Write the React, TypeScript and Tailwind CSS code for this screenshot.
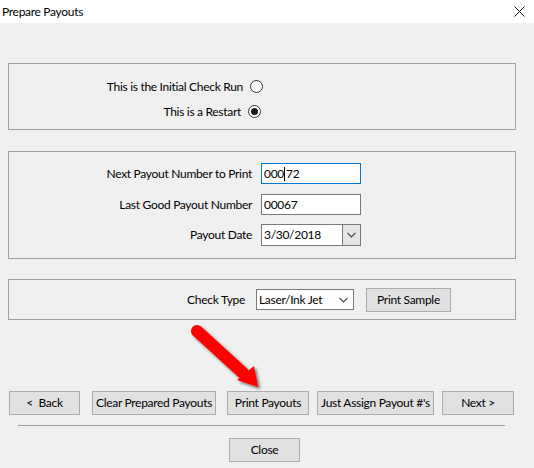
import { ReactNode } from "react";

const font = { fontFamily: 'Lato, "Segoe UI", sans-serif' };

function Radio({ checked }: { checked?: boolean }) {
  return (
    <span className="flex h-[13px] w-[13px] items-center justify-center rounded-full border border-[#333] bg-white">
      {checked && <span className="h-[7px] w-[7px] rounded-full bg-[#1a1a1a]" />}
    </span>
  );
}

function Btn({ children, className = "" }: { children: ReactNode; className?: string }) {
  return (
    <button
      className={`flex h-[24px] items-center justify-center whitespace-nowrap border border-[#adadad] bg-[#e1e1e1] text-[12px] tracking-[-0.3px] text-black ${className}`}
    >
      {children}
    </button>
  );
}

function Chevron() {
  return (
    <svg width="9" height="6" viewBox="0 0 9 6" fill="none">
      <path d="M0.5 0.8 L4.5 4.8 L8.5 0.8" stroke="#444" strokeWidth="1.2" />
    </svg>
  );
}

function Group({ children, className = "" }: { children: ReactNode; className?: string }) {
  return <div className={`mr-[10px] border border-[#a0a0a0] ${className}`}>{children}</div>;
}

export default function App() {
  return (
    <div
      className="relative h-[468px] w-[534px] overflow-hidden bg-[#f0f0f0] text-[12px] tracking-[-0.3px] text-black"
      style={font}
    >
      {/* window title */}
      <div className="flex h-[23px] items-center justify-between bg-white pl-[2px] pr-[9px]">
        <span className="text-[12px]">Prepare Payouts</span>
        <svg width="11" height="11" viewBox="0 0 11 11">
          <path d="M0.5 0.5 L10.5 10.5 M10.5 0.5 L0.5 10.5" stroke="#111" strokeWidth="1" />
        </svg>
      </div>

      <div className="flex flex-col px-[8px]">
        {/* run type */}
        <Group className="mt-[40px] h-[67px] pt-[13px]">
          <div className="flex h-[19px] items-center">
            <span className="w-[234px] text-right">This is the Initial Check Run</span>
            <span className="ml-[7px]"><Radio /></span>
          </div>
          <div className="mt-[6px] flex h-[19px] items-center">
            <span className="w-[232px] text-right">This is a Restart</span>
            <span className="ml-[7px]"><Radio checked /></span>
          </div>
        </Group>

        {/* payout numbers */}
        <Group className="mt-[21px] h-[108px] pt-[11px]">
          <div className="flex items-center">
            <span className="w-[243px] text-right">Next Payout Number to Print</span>
            <div className="ml-[9px] flex h-[21px] w-[100px] items-center border border-[#0078d7] bg-white pl-[2px]">
              000<span className="mx-[0.5px] h-[14px] w-px bg-black" />72
            </div>
          </div>
          <div className="mt-[10px] flex items-center">
            <span className="w-[243px] text-right">Last Good Payout Number</span>
            <div className="ml-[9px] flex h-[21px] w-[100px] items-center border border-[#7a7a7a] bg-white pl-[2px]">
              00067
            </div>
          </div>
          <div className="mt-[9px] flex items-center">
            <span className="w-[243px] text-right">Payout Date</span>
            <div className="ml-[9px] flex h-[22px] w-[100px] items-stretch border border-[#7a7a7a] bg-white">
              <span className="flex flex-1 items-center pl-[2px]">3/30/2018</span>
              <span className="flex w-[18px] items-center justify-center border-l border-[#7a7a7a] bg-[#e5e5e5]">
                <Chevron />
              </span>
            </div>
          </div>
        </Group>

        {/* check type */}
        <Group className="mt-[20px] flex h-[41px] items-center">
          <span className="w-[236px] text-right">Check Type</span>
          <div className="ml-[11px] flex h-[21px] w-[98px] items-center justify-between border border-[#7a7a7a] bg-white pl-[2px] pr-[5px]">
            <span>Laser/Ink Jet</span>
            <Chevron />
          </div>
          <Btn className="ml-[12px] h-[23px] w-[85px]">Print Sample</Btn>
        </Group>

        {/* navigation */}
        <div className="mt-[71px] flex">
          <Btn className="ml-px w-[71px]">&lt;&nbsp; Back</Btn>
          <Btn className="ml-[12px] w-[124px]">Clear Prepared Payouts</Btn>
          <Btn className="ml-[11px] w-[82px]">Print Payouts</Btn>
          <Btn className="ml-[8px] w-[117px]">Just Assign Payout #'s</Btn>
          <Btn className="ml-[8px] w-[72px]">Next &gt;</Btn>
        </div>

        <div className="ml-[10px] mr-[21px] mt-[10px] h-px bg-[#a0a0a0]" />

        <div className="mt-[12px] flex">
          <Btn className="ml-[221px] w-[71px]">Close</Btn>
        </div>
      </div>

      {/* callout arrow */}
      <svg className="pointer-events-none absolute left-0 top-0" width="534" height="468">
        <defs>
          <filter id="shadow" x="-20%" y="-20%" width="140%" height="140%">
            <feDropShadow dx="2" dy="2" stdDeviation="1.5" floodColor="#000" floodOpacity="0.55" />
          </filter>
        </defs>
        <g filter="url(#shadow)" fill="#ff0000">
          <line x1="197" y1="331" x2="243" y2="373" stroke="#ff0000" strokeWidth="12" strokeLinecap="round" />
          <polygon points="237,380 254,366 258,387" />
        </g>
      </svg>
    </div>
  );
}
